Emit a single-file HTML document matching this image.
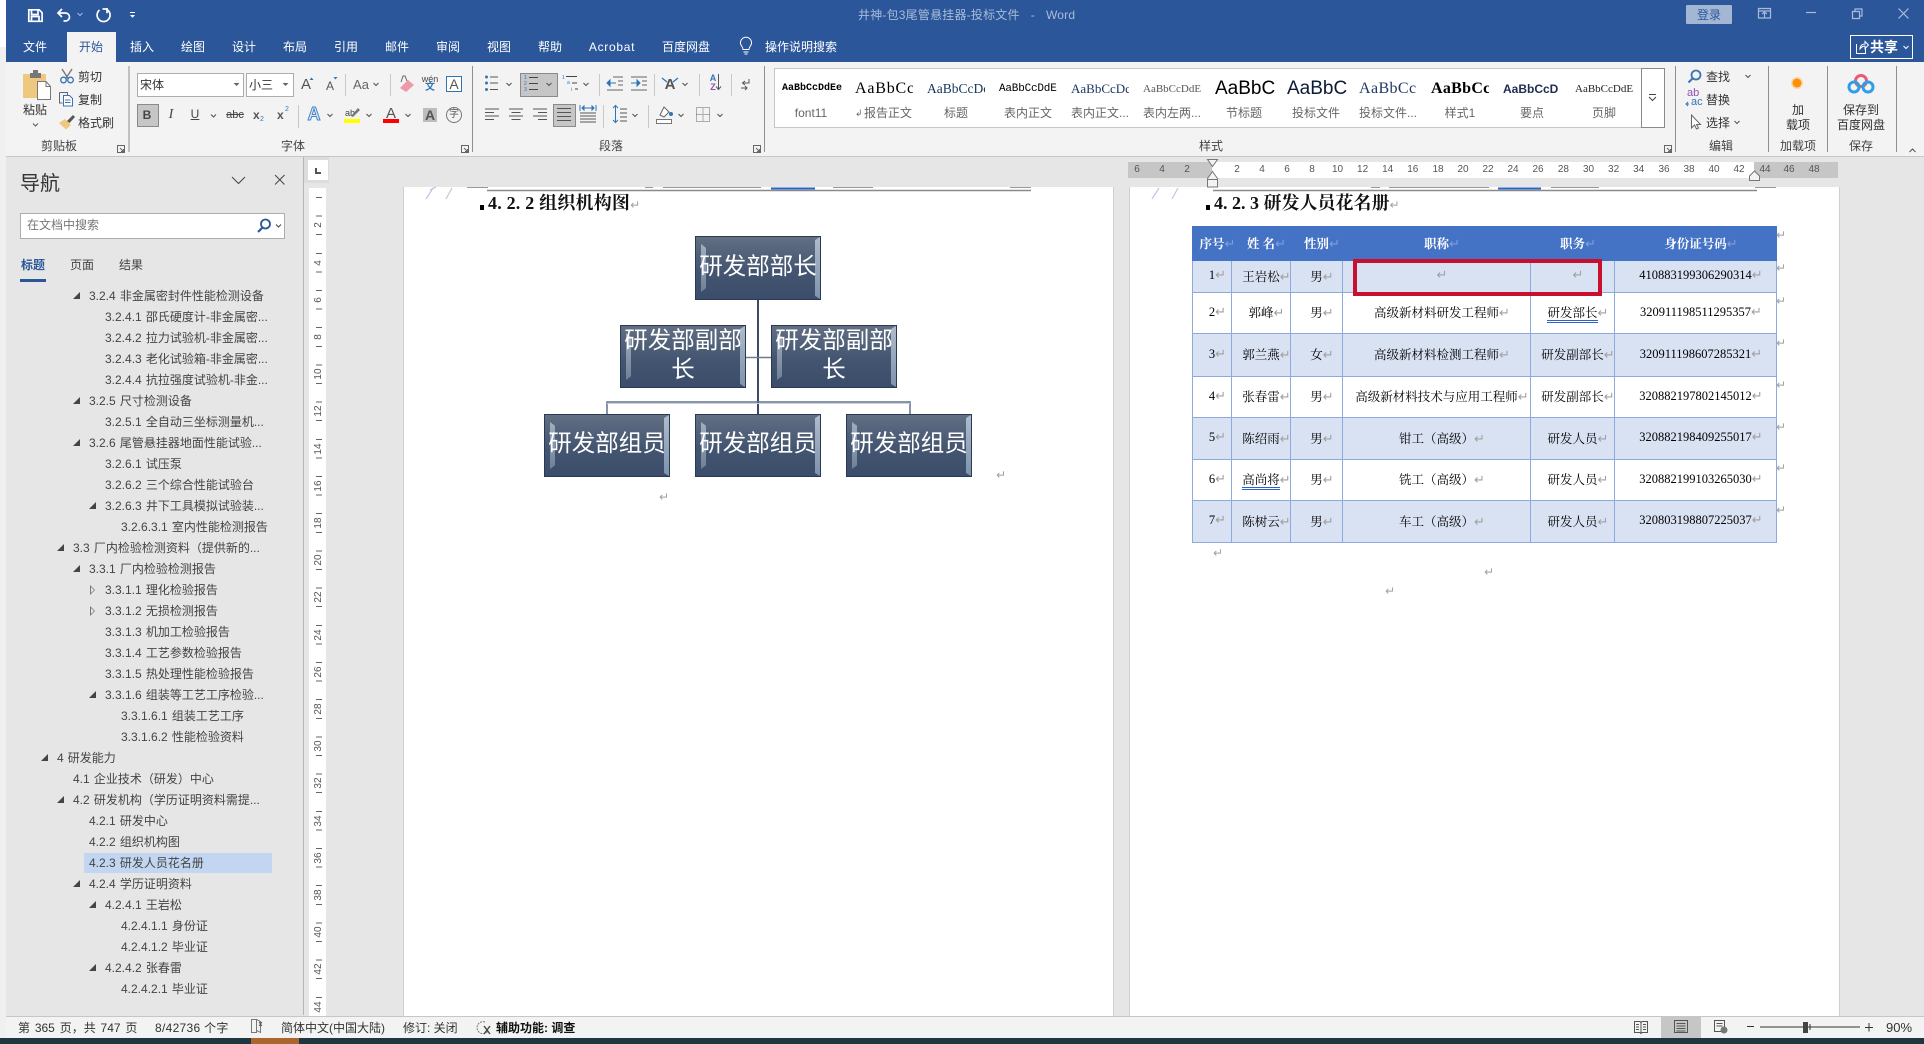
<!DOCTYPE html>
<html lang="zh">
<head>
<meta charset="utf-8">
<title>Word</title>
<style>
html,body{margin:0;padding:0}
body{width:1924px;height:1044px;position:relative;overflow:hidden;background:#e6e6e6;font-family:"Liberation Sans","Noto Sans CJK SC",sans-serif;font-size:12px;color:#444}
.a{position:absolute}
.t{position:absolute;white-space:nowrap;line-height:16px;height:16px}
.c{transform:translateX(-50%)}
.w{color:#fff}
.d{color:#333}
.g{color:#444}
.tree{position:absolute;left:0;top:1px;word-spacing:.8px}
.tr{position:absolute;width:0;height:0;border-left:7px solid transparent;border-bottom:7px solid #444}
.ho{position:absolute;width:0;height:0;border-left:5px solid #777;border-top:5px solid transparent;border-bottom:5px solid transparent}
.ho:after{content:"";position:absolute;left:-4px;top:-3px;width:0;height:0;border-left:3px solid #e6e6e6;border-top:3px solid transparent;border-bottom:3px solid transparent}
.hn{position:absolute;font-size:10px;line-height:12px;color:#555;top:164px;transform:translateX(-50%)}
.vn{position:absolute;font-size:10px;line-height:12px;color:#555;left:318px;width:0;height:0;white-space:nowrap}
.vn span{position:absolute;transform:translate(-50%,-50%) rotate(-90deg);left:1px;top:0}
.p{position:absolute;overflow:hidden;white-space:nowrap;width:58px;height:24px;line-height:24px;top:77px;color:#000}
.l{position:absolute;top:105px;line-height:16px;color:#666;white-space:nowrap;transform:translateX(-50%)}
.box{position:absolute;width:126px;border:1px solid #2a3a52;box-sizing:border-box;background:linear-gradient(#626f84,#435570 55%,#3c4d6b);color:#fff;font-family:"Noto Sans CJK SC",sans-serif;font-size:23.5px;line-height:29px;text-align:center}
.box:before{content:"";position:absolute;left:5px;top:7px;bottom:7px;width:5px;background:linear-gradient(#a3afbe,#6e8098);clip-path:polygon(0 0,100% 8%,100% 92%,0 100%)}
.box:after{content:"";position:absolute;right:0;top:0;bottom:0;width:5px;background:linear-gradient(#aebccc,#7e93ad);clip-path:polygon(100% 0,100% 100%,0 95%,0 5%)}
.box b{position:relative;z-index:1;font-weight:400;display:block;margin:0 -3px}
.ret{color:#a0a0a0;font-family:"DejaVu Sans",sans-serif;font-size:12px}
table{position:absolute;left:1192px;top:226px;width:584px;border-collapse:collapse;table-layout:fixed;font-family:"Liberation Serif","Noto Serif CJK SC",serif;font-size:12.5px;color:#000}
td{border:1px solid #8eaadb;padding:0 0 2px 0;text-align:center;white-space:nowrap;overflow:visible}
table .ret{display:inline-block;width:0;font-size:13px;line-height:1;text-align:left;font-weight:400}
tr.h td{background:#4472c4;color:#fff;font-weight:700;border-color:#4472c4}
tr.b td{background:#d9e2f3}
.u{border-bottom:3px double #2e62c8;padding-bottom:0}
</style>
</head>
<body>
<!-- base regions -->
<div class="a" style="left:0;top:0;width:6px;height:47px;background:#fff"></div>
<div class="a" style="left:0;top:47px;width:6px;height:991px;background:#f0f0f0"></div>
<div class="a" style="left:6px;top:0;width:1918px;height:62px;background:#2b579a"></div>
<div class="a" style="left:6px;top:62px;width:1918px;height:94px;background:#f3f3f3;border-bottom:1px solid #c6c6c6"></div>
<div class="a" style="left:67px;top:32px;width:49px;height:30px;background:#f3f3f3"></div>

<!-- title -->
<div class="t" style="left:858px;top:7px;color:#a8bbd8;letter-spacing:.2px;word-spacing:2px">井神-包3尾管悬挂器-投标文件 &nbsp;-&nbsp; Word</div>
<div class="a" style="left:1686px;top:5px;width:46px;height:19px;background:#a3b7d4;border-radius:1px"></div>
<div class="t c" style="left:1709px;top:7px;color:#2b579a">登录</div>

<!-- tabs -->
<div class="t c w" style="left:35px;top:39px">文件</div>
<div class="t c" style="left:91px;top:39px;color:#2b579a">开始</div>
<div class="t c w" style="left:142px;top:39px">插入</div>
<div class="t c w" style="left:193px;top:39px">绘图</div>
<div class="t c w" style="left:244px;top:39px">设计</div>
<div class="t c w" style="left:295px;top:39px">布局</div>
<div class="t c w" style="left:346px;top:39px">引用</div>
<div class="t c w" style="left:397px;top:39px">邮件</div>
<div class="t c w" style="left:448px;top:39px">审阅</div>
<div class="t c w" style="left:499px;top:39px">视图</div>
<div class="t c w" style="left:550px;top:39px">帮助</div>
<div class="t c w" style="left:612px;top:39px;letter-spacing:.7px">Acrobat</div>
<div class="t c w" style="left:686px;top:39px">百度网盘</div>
<div class="t w" style="left:765px;top:39px">操作说明搜索</div>
<div class="a" style="left:1850px;top:35px;width:61px;height:22px;border:1px solid #fff"></div>
<div class="t w" style="left:1870px;top:39px;font-size:14px;font-weight:700">共享</div>

<!-- clipboard labels -->
<div class="t c d" style="left:35px;top:102px">粘贴</div>
<div class="t d" style="left:78px;top:69px">剪切</div>
<div class="t d" style="left:78px;top:92px">复制</div>
<div class="t d" style="left:78px;top:115px">格式刷</div>
<div class="t c g" style="left:59px;top:138px">剪贴板</div>

<!-- font boxes -->
<div class="a" style="left:137px;top:73px;width:105px;height:22px;background:#fff;border:1px solid #adadad"></div>
<div class="t d" style="left:140px;top:77px">宋体</div>
<div class="a" style="left:246px;top:73px;width:46px;height:22px;background:#fff;border:1px solid #adadad"></div>
<div class="t d" style="left:249px;top:77px">小三</div>
<div class="a" style="left:137px;top:104px;width:20px;height:21px;background:#c6c6c6;border:1px solid #8a8a8a"></div>
<div class="t c" style="left:147px;top:107px;font-weight:700;color:#444">B</div>
<div class="t c" style="left:171px;top:107px;font-family:'Liberation Serif',serif;font-style:italic;font-size:14px;color:#444">I</div>
<div class="t c" style="left:195px;top:106px;text-decoration:underline;color:#444">U</div>
<div class="t c" style="left:235px;top:107px;text-decoration:line-through;color:#444;font-size:11px">abc</div>
<div class="t" style="left:253px;top:107px;font-weight:700;color:#555">x</div>
<div class="t" style="left:260px;top:112px;font-size:7px;color:#3a74b5">2</div>
<div class="t" style="left:277px;top:107px;font-weight:700;color:#555">x</div>
<div class="t" style="left:285px;top:102px;font-size:7px;color:#3a74b5">2</div>
<div class="t c" style="left:306px;top:77px;font-size:15px;color:#555">A</div>
<div class="t c" style="left:330px;top:78px;font-size:12px;color:#555">A</div>
<div class="t c" style="left:361px;top:77px;font-size:13px;color:#666">Aa</div>
<div class="t c" style="left:430px;top:71px;font-size:9px;color:#444">wén</div>
<div class="t c" style="left:430px;top:80px;font-size:10px;color:#2e75b6;font-weight:700">文</div>
<div class="a" style="left:446px;top:76px;width:14px;height:14px;border:1px solid #2e75b6;background:#fff"></div>
<div class="t c" style="left:454px;top:76px;font-size:14px;color:#555">A</div>
<div class="t c" style="left:314px;top:106px;font-size:18px;font-weight:700;color:#dce8f5;-webkit-text-stroke:1px #4a86c5">A</div>
<div class="t c" style="left:350px;top:105px;font-size:9px;color:#444">ab</div>
<div class="t c" style="left:391px;top:106px;font-size:15px;color:#555">A</div>
<div class="a" style="left:423px;top:108px;width:14px;height:14px;background:#bdbdbd"></div>
<div class="t c" style="left:430px;top:107px;font-size:14px;font-weight:700;color:#555">A</div>
<div class="t c" style="left:454px;top:107px;font-size:10px;color:#555">字</div>
<div class="t c g" style="left:293px;top:138px">字体</div>

<!-- paragraph -->
<div class="a" style="left:520px;top:73px;width:36px;height:22px;background:#c6c6c6;border:1px solid #8a8a8a"></div>
<div class="a" style="left:553px;top:104px;width:21px;height:21px;background:#c6c6c6;border:1px solid #8a8a8a"></div>
<div class="t c" style="left:670px;top:77px;font-size:15px;font-weight:700;color:#555">A</div>
<div class="t c" style="left:713px;top:70px;font-size:9px;font-weight:700;color:#2e75b6">A</div>
<div class="t c" style="left:713px;top:79px;font-size:9px;font-weight:700;color:#8a55a8">Z</div>
<div class="t c g" style="left:611px;top:138px">段落</div>

<!-- styles gallery -->
<div class="a" style="left:774px;top:68px;width:866px;height:58px;background:#fff;border:1px solid #c6c6c6"></div>
<div class="a" style="left:1641px;top:68px;width:22px;height:58px;background:#fff;border:1px solid #8a8a8a"></div>
<div class="p" style="left:782px;width:60px;font:700 10px/24px 'Liberation Mono',monospace">AaBbCcDdEe</div>
<div class="p" style="left:855px;font:16px/24px 'Liberation Serif',serif;letter-spacing:.8px">AaBbCcI</div>
<div class="p" style="left:927px;font:13.5px/24px 'Liberation Serif',serif;color:#17365d">AaBbCcDc</div>
<div class="p" style="left:999px;font:11px/24px 'Liberation Mono',monospace;letter-spacing:-.2px">AaBbCcDdE</div>
<div class="p" style="left:1071px;font:13px/24px 'Liberation Serif',serif;color:#17365d">AaBbCcDc</div>
<div class="p" style="left:1143px;font:11px/24px 'Liberation Serif',serif;color:#555">AaBbCcDdEe</div>
<div class="p" style="left:1215px;width:61px;font:19px/24px 'Liberation Sans',sans-serif">AaBbC</div>
<div class="p" style="left:1287px;width:61px;font:19px/24px 'Liberation Sans',sans-serif;color:#0b1a33">AaBbC</div>
<div class="p" style="left:1359px;font:16px/24px 'Liberation Serif',serif;letter-spacing:.4px;color:#1f3864">AaBbCc</div>
<div class="p" style="left:1431px;font:700 16px/24px 'Liberation Serif',serif;letter-spacing:.3px">AaBbCc</div>
<div class="p" style="left:1503px;font:700 12px/24px 'Liberation Sans',sans-serif;color:#1f2d50">AaBbCcD</div>
<div class="p" style="left:1575px;font:11px/24px 'Liberation Serif',serif;color:#222">AaBbCcDdE</div>
<div class="l" style="left:811px">font11</div>
<div class="l" style="left:888px">报告正文</div>
<div class="t" style="left:855px;top:105px;font-size:9px;color:#666">↲</div>
<div class="l" style="left:956px">标题</div>
<div class="l" style="left:1028px">表内正文</div>
<div class="l" style="left:1100px">表内正文...</div>
<div class="l" style="left:1172px">表内左两...</div>
<div class="l" style="left:1244px">节标题</div>
<div class="l" style="left:1316px">投标文件</div>
<div class="l" style="left:1388px">投标文件...</div>
<div class="l" style="left:1460px">样式1</div>
<div class="l" style="left:1532px">要点</div>
<div class="l" style="left:1604px">页脚</div>
<div class="t c g" style="left:1211px;top:138px">样式</div>

<!-- editing etc -->
<div class="t d" style="left:1706px;top:69px">查找</div>
<div class="t d" style="left:1706px;top:92px">替换</div>
<div class="t d" style="left:1706px;top:115px">选择</div>
<div class="t" style="left:1687px;top:88px;font-size:11px;line-height:10px;height:10px;color:#8a55a8">ab</div>
<div class="t" style="left:1691px;top:97px;font-size:11px;line-height:10px;height:10px;color:#2e75b6">ac</div>
<div class="t c g" style="left:1721px;top:138px">编辑</div>
<div class="t c d" style="left:1798px;top:102px">加</div>
<div class="t c d" style="left:1798px;top:117px">载项</div>
<div class="t c g" style="left:1798px;top:138px">加载项</div>
<div class="t c d" style="left:1861px;top:102px">保存到</div>
<div class="t c d" style="left:1861px;top:117px">百度网盘</div>
<div class="t c g" style="left:1861px;top:138px">保存</div>

<!-- nav pane -->
<div class="t" style="left:20px;top:171px;font-size:20px;line-height:26px;height:26px;color:#333">导航</div>
<div class="a" style="left:20px;top:213px;width:263px;height:24px;background:#fff;border:1px solid #adadad"></div>
<div class="t" style="left:27px;top:217px;color:#777">在文档中搜索</div>
<div class="t" style="left:21px;top:257px;color:#2b579a;font-weight:700">标题</div>
<div class="t" style="left:70px;top:257px">页面</div>
<div class="t" style="left:119px;top:257px">结果</div>
<div class="a" style="left:20px;top:279px;width:26px;height:3px;background:#2b579a"></div>
<div class="a" style="left:84px;top:853px;width:188px;height:20px;background:#c3d6f1"></div>

<div class="tree">
<div class="tr" style="left:73px;top:291px"></div><div class="t" style="left:89px;top:287px">3.2.4 非金属密封件性能检测设备</div>
<div class="t" style="left:105px;top:308px">3.2.4.1 邵氏硬度计-非金属密...</div>
<div class="t" style="left:105px;top:329px">3.2.4.2 拉力试验机-非金属密...</div>
<div class="t" style="left:105px;top:350px">3.2.4.3 老化试验箱-非金属密...</div>
<div class="t" style="left:105px;top:371px">3.2.4.4 抗拉强度试验机-非金...</div>
<div class="tr" style="left:73px;top:396px"></div><div class="t" style="left:89px;top:392px">3.2.5 尺寸检测设备</div>
<div class="t" style="left:105px;top:413px">3.2.5.1 全自动三坐标测量机...</div>
<div class="tr" style="left:73px;top:438px"></div><div class="t" style="left:89px;top:434px">3.2.6 尾管悬挂器地面性能试验...</div>
<div class="t" style="left:105px;top:455px">3.2.6.1 试压泵</div>
<div class="t" style="left:105px;top:476px">3.2.6.2 三个综合性能试验台</div>
<div class="tr" style="left:89px;top:501px"></div><div class="t" style="left:105px;top:497px">3.2.6.3 井下工具模拟试验装...</div>
<div class="t" style="left:121px;top:518px">3.2.6.3.1 室内性能检测报告</div>
<div class="tr" style="left:57px;top:543px"></div><div class="t" style="left:73px;top:539px">3.3 厂内检验检测资料（提供新的...</div>
<div class="tr" style="left:73px;top:564px"></div><div class="t" style="left:89px;top:560px">3.3.1 厂内检验检测报告</div>
<div class="ho" style="left:90px;top:584px"></div><div class="t" style="left:105px;top:581px">3.3.1.1 理化检验报告</div>
<div class="ho" style="left:90px;top:605px"></div><div class="t" style="left:105px;top:602px">3.3.1.2 无损检测报告</div>
<div class="t" style="left:105px;top:623px">3.3.1.3 机加工检验报告</div>
<div class="t" style="left:105px;top:644px">3.3.1.4 工艺参数检验报告</div>
<div class="t" style="left:105px;top:665px">3.3.1.5 热处理性能检验报告</div>
<div class="tr" style="left:89px;top:690px"></div><div class="t" style="left:105px;top:686px">3.3.1.6 组装等工艺工序检验...</div>
<div class="t" style="left:121px;top:707px">3.3.1.6.1 组装工艺工序</div>
<div class="t" style="left:121px;top:728px">3.3.1.6.2 性能检验资料</div>
<div class="tr" style="left:41px;top:753px"></div><div class="t" style="left:57px;top:749px">4 研发能力</div>
<div class="t" style="left:73px;top:770px">4.1 企业技术（研发）中心</div>
<div class="tr" style="left:57px;top:795px"></div><div class="t" style="left:73px;top:791px">4.2 研发机构（学历证明资料需提...</div>
<div class="t" style="left:89px;top:812px">4.2.1 研发中心</div>
<div class="t" style="left:89px;top:833px">4.2.2 组织机构图</div>
<div class="t" style="left:89px;top:854px">4.2.3 研发人员花名册</div>
<div class="tr" style="left:73px;top:879px"></div><div class="t" style="left:89px;top:875px">4.2.4 学历证明资料</div>
<div class="tr" style="left:89px;top:900px"></div><div class="t" style="left:105px;top:896px">4.2.4.1 王岩松</div>
<div class="t" style="left:121px;top:917px">4.2.4.1.1 身份证</div>
<div class="t" style="left:121px;top:938px">4.2.4.1.2 毕业证</div>
<div class="tr" style="left:89px;top:963px"></div><div class="t" style="left:105px;top:959px">4.2.4.2 张春雷</div>
<div class="t" style="left:121px;top:980px">4.2.4.2.1 毕业证</div>
</div>

<div class="a" style="left:303px;top:157px;width:1px;height:858px;background:#b5b5b5"></div>

<!-- vertical ruler -->
<div class="a" style="left:304px;top:157px;width:25px;height:26px;background:#dcdcdc"></div>
<div class="a" style="left:308px;top:160px;width:20px;height:20px;background:#fff"></div>
<div class="a" style="left:315px;top:168px;width:2px;height:6px;background:#555"></div>
<div class="a" style="left:315px;top:172px;width:6px;height:2px;background:#555"></div>
<div class="a" style="left:309px;top:188px;width:17px;height:828px;background:#fff"></div>
<div class="a" style="left:316px;top:197px;width:6px;height:810px;background:repeating-linear-gradient(to bottom,#666 0,#666 1px,transparent 1px,transparent 18.6px)"></div>
<div class="vn" style="top:225px"><span style="background:#fff">2</span></div>
<div class="vn" style="top:263px"><span style="background:#fff">4</span></div>
<div class="vn" style="top:300px"><span style="background:#fff">6</span></div>
<div class="vn" style="top:337px"><span style="background:#fff">8</span></div>
<div class="vn" style="top:374px"><span style="background:#fff">10</span></div>
<div class="vn" style="top:411px"><span style="background:#fff">12</span></div>
<div class="vn" style="top:449px"><span style="background:#fff">14</span></div>
<div class="vn" style="top:486px"><span style="background:#fff">16</span></div>
<div class="vn" style="top:523px"><span style="background:#fff">18</span></div>
<div class="vn" style="top:560px"><span style="background:#fff">20</span></div>
<div class="vn" style="top:597px"><span style="background:#fff">22</span></div>
<div class="vn" style="top:635px"><span style="background:#fff">24</span></div>
<div class="vn" style="top:672px"><span style="background:#fff">26</span></div>
<div class="vn" style="top:709px"><span style="background:#fff">28</span></div>
<div class="vn" style="top:746px"><span style="background:#fff">30</span></div>
<div class="vn" style="top:783px"><span style="background:#fff">32</span></div>
<div class="vn" style="top:821px"><span style="background:#fff">34</span></div>
<div class="vn" style="top:858px"><span style="background:#fff">36</span></div>
<div class="vn" style="top:895px"><span style="background:#fff">38</span></div>
<div class="vn" style="top:932px"><span style="background:#fff">40</span></div>
<div class="vn" style="top:969px"><span style="background:#fff">42</span></div>
<div class="vn" style="top:1007px"><span style="background:#fff">44</span></div>

<!-- horizontal ruler -->
<div class="a" style="left:1128px;top:162px;width:710px;height:16px;background:#c6c6c6"></div>
<div class="a" style="left:1212px;top:162px;width:542px;height:16px;background:#fff"></div>
<div class="hn" style="left:1137px">6</div><div class="hn" style="left:1162px">4</div><div class="hn" style="left:1187px">2</div>
<div class="hn" style="left:1237px">2</div><div class="hn" style="left:1262px">4</div><div class="hn" style="left:1287px">6</div><div class="hn" style="left:1312px">8</div><div class="hn" style="left:1337.5px">10</div><div class="hn" style="left:1362.6px">12</div><div class="hn" style="left:1387.7px">14</div><div class="hn" style="left:1412.8px">16</div><div class="hn" style="left:1438px">18</div><div class="hn" style="left:1463px">20</div><div class="hn" style="left:1488px">22</div><div class="hn" style="left:1513px">24</div><div class="hn" style="left:1538px">26</div><div class="hn" style="left:1563.4px">28</div><div class="hn" style="left:1588.5px">30</div><div class="hn" style="left:1613.6px">32</div><div class="hn" style="left:1638.7px">34</div><div class="hn" style="left:1664px">36</div><div class="hn" style="left:1689px">38</div><div class="hn" style="left:1714px">40</div><div class="hn" style="left:1739px">42</div><div class="hn" style="left:1765px">44</div><div class="hn" style="left:1789px">46</div><div class="hn" style="left:1814px">48</div>

<!-- pages -->
<div class="a" style="left:404px;top:187px;width:709px;height:829px;background:#fff;box-shadow:-1px 0 0 #cfcfcf,1px 0 0 #cfcfcf"></div>
<div class="a" style="left:1130px;top:187px;width:709px;height:829px;background:#fff;box-shadow:-1px 0 0 #cfcfcf,1px 0 0 #cfcfcf"></div>

<!-- page 1 -->
<div class="a" style="left:480px;top:205px;width:4px;height:5px;background:#000"></div>
<div class="t" style="left:488px;top:191px;height:24px;line-height:24px;font-family:'Liberation Serif','Noto Serif CJK SC',serif;font-size:18px;font-weight:700;color:#111;letter-spacing:.2px">4. 2. 2 组织机构图<span class="ret" style="font-weight:400;font-size:12px">↵</span></div>
<div class="box" style="left:695px;top:236px;height:64px;padding-top:13px"><b>研发部部长</b></div>
<div class="box" style="left:620px;top:325px;height:63px;padding-top:0"><b style="margin-top:-2px">研发部副部<br>长</b></div>
<div class="box" style="left:771px;top:325px;height:63px;padding-top:0"><b style="margin-top:-2px">研发部副部<br>长</b></div>
<div class="box" style="left:544px;top:414px;height:63px;padding-top:12px"><b>研发部组员</b></div>
<div class="box" style="left:695px;top:414px;height:63px;padding-top:12px"><b>研发部组员</b></div>
<div class="box" style="left:846px;top:414px;height:63px;padding-top:12px"><b>研发部组员</b></div>
<div class="t c ret" style="left:1001px;top:467px">↵</div>
<div class="t c ret" style="left:664px;top:489px">↵</div>

<!-- page 2 -->
<div class="a" style="left:1206px;top:205px;width:4px;height:5px;background:#000"></div>
<div class="t" style="left:1214px;top:191px;height:24px;line-height:24px;font-family:'Liberation Serif','Noto Serif CJK SC',serif;font-size:18px;font-weight:700;color:#111;letter-spacing:0">4. 2. 3 研发人员花名册<span class="ret" style="font-weight:400;font-size:12px">↵</span></div>

<table>
<colgroup><col style="width:39px"><col style="width:59px"><col style="width:52px"><col style="width:188px"><col style="width:84px"><col style="width:162px"></colgroup>
<tr class="h" style="height:34px"><td>序号<span class="ret" style="color:#7f9fdc">↵</span></td><td>姓 名<span class="ret" style="color:#7f9fdc">↵</span></td><td>性别<span class="ret" style="color:#7f9fdc">↵</span></td><td>职称<span class="ret" style="color:#7f9fdc">↵</span></td><td>职务<span class="ret" style="color:#7f9fdc">↵</span></td><td>身份证号码<span class="ret" style="color:#7f9fdc">↵</span></td></tr>
<tr class="b" style="height:32px"><td>1<span class="ret">↵</span></td><td>王岩松<span class="ret">↵</span></td><td>男<span class="ret">↵</span></td><td><span class="ret">↵</span></td><td><span class="ret">↵</span></td><td>410883199306290314<span class="ret">↵</span></td></tr>
<tr style="height:41px"><td>2<span class="ret">↵</span></td><td>郭峰<span class="ret">↵</span></td><td>男<span class="ret">↵</span></td><td>高级新材料研发工程师<span class="ret">↵</span></td><td><span class="u">研发部长</span><span class="ret">↵</span></td><td>320911198511295357<span class="ret">↵</span></td></tr>
<tr class="b" style="height:43px"><td>3<span class="ret">↵</span></td><td>郭兰燕<span class="ret">↵</span></td><td>女<span class="ret">↵</span></td><td>高级新材料检测工程师<span class="ret">↵</span></td><td>研发副部长<span class="ret">↵</span></td><td>320911198607285321<span class="ret">↵</span></td></tr>
<tr style="height:41px"><td>4<span class="ret">↵</span></td><td>张春雷<span class="ret">↵</span></td><td>男<span class="ret">↵</span></td><td>高级新材料技术与应用工程师<span class="ret">↵</span></td><td>研发副部长<span class="ret">↵</span></td><td>320882197802145012<span class="ret">↵</span></td></tr>
<tr class="b" style="height:42px"><td>5<span class="ret">↵</span></td><td>陈绍雨<span class="ret">↵</span></td><td>男<span class="ret">↵</span></td><td>钳工（高级）<span class="ret">↵</span></td><td>研发人员<span class="ret">↵</span></td><td>320882198409255017<span class="ret">↵</span></td></tr>
<tr style="height:41px"><td>6<span class="ret">↵</span></td><td><span class="u">高尚将</span><span class="ret">↵</span></td><td>男<span class="ret">↵</span></td><td>铣工（高级）<span class="ret">↵</span></td><td>研发人员<span class="ret">↵</span></td><td>320882199103265030<span class="ret">↵</span></td></tr>
<tr class="b" style="height:42px"><td>7<span class="ret">↵</span></td><td>陈树云<span class="ret">↵</span></td><td>男<span class="ret">↵</span></td><td>车工（高级）<span class="ret">↵</span></td><td>研发人员<span class="ret">↵</span></td><td>320803198807225037<span class="ret">↵</span></td></tr>
</table>
<div class="a" style="left:1353px;top:259px;width:241px;height:29px;border:4px solid #c8102e"></div>
<div class="t c ret" style="left:1781px;top:227px">↵</div>
<div class="t c ret" style="left:1781px;top:260px">↵</div>
<div class="t c ret" style="left:1781px;top:293px">↵</div>
<div class="t c ret" style="left:1781px;top:335px">↵</div>
<div class="t c ret" style="left:1781px;top:377px">↵</div>
<div class="t c ret" style="left:1781px;top:419px">↵</div>
<div class="t c ret" style="left:1781px;top:460px">↵</div>
<div class="t c ret" style="left:1781px;top:502px">↵</div>
<div class="t c ret" style="left:1218px;top:545px">↵</div>
<div class="t c ret" style="left:1489px;top:564px">↵</div>
<div class="t c ret" style="left:1390px;top:583px">↵</div>

<!-- status bar -->
<div class="a" style="left:6px;top:1016px;width:1918px;height:22px;background:#f3f3f3;border-top:1px solid #c6c6c6;box-sizing:border-box"></div>
<div class="a" style="left:1661px;top:1017px;width:40px;height:21px;background:#c6c6c6"></div>
<div class="a" style="left:0;top:1038px;width:1924px;height:6px;background:#1f3540"></div>
<div class="a" style="left:251px;top:1038px;width:48px;height:6px;background:#a9662e"></div>
<div class="t d" style="left:18px;top:1020px;word-spacing:1.5px">第 365 页，共 747 页</div>
<div class="t d" style="left:155px;top:1020px;letter-spacing:.3px">8/42736 个字</div>
<div class="t d" style="left:281px;top:1020px">简体中文(中国大陆)</div>
<div class="t d" style="left:403px;top:1020px">修订: 关闭</div>
<div class="t" style="left:496px;top:1020px;color:#111;font-weight:700">辅助功能: 调查</div>
<div class="t d" style="left:1886px;top:1020px;font-size:13px">90%</div>

<!-- icons overlay -->
<svg class="a" style="left:0;top:0" width="1924" height="1044" viewBox="0 0 1924 1044" fill="none">
 <!-- QAT -->
 <g stroke="#fff" stroke-width="1.7">
  <path d="M28.8 9.8h10.4l2.9 2.9v8.6H28.8z"/><path d="M31.5 10v4.5h6.5V10"/><path d="M31.5 21v-4.5h7.5V21"/>
  <path d="M58.5 13h7a4 4 0 0 1 0 8h-2"/><path d="M62 9l-4 4l4 4"/>
  <path d="M99.5 10a6.5 6.5 0 1 0 7.6-.4"/><path d="M107 8v5.2"/><path d="M102.5 9h4.6"/>
 </g>
 <path d="M77.5 13l2.5 2.5l2.5-2.5" stroke="#a8bbd8" stroke-width="1"/>
 <path d="M130 12.5h5" stroke="#fff"/><path d="M130 15h5l-2.5 2.8z" fill="#fff"/>
 <!-- window -->
 <g stroke="#a8bbd8" stroke-width="1.2">
  <path d="M1758.5 8.5h12v9.5h-12zM1758.5 11h12"/><path d="M1764.5 17.5v-5M1762 14l2.5-2l2.5 2"/>
  <path d="M1806 12.5h10"/>
  <path d="M1852.5 11.5h7v7h-7zM1855 11.5v-2.5h7v7h-2.500"/>
  <path d="M1898.500 8.500l10 10M1908.500 8.500l-10 10"/>
 </g>
 <!-- share icon & lightbulb -->
 <g stroke="#fff" stroke-width="1">
  <path d="M1856.500 44v9.500h9V48"/><path d="M1860 49c0-3 2-5 5-5v-2.500l3.500 3.500l-3.500 3.500V46c-2 0-3.500 1-5 3z"/>
  <g transform="translate(0,-6)"><path d="M741 51a5.500 5.500 0 1 1 10 0c-1 1.500-2 2.500-2 4.500h-6c0-2-1-3-2-4.500z"/><path d="M743.500 58h5M744.500 60h3"/></g>
 </g>
 <path d="M1903.500 46l2.500 2.500l2.500-2.500" stroke="#fff"/>

 <!-- group separators -->
 <g stroke="#8f8f8f"><path d="M129 66v86M472.500 66v86M764.500 66v86M1675.500 66v86M1768.500 66v86M1827.500 66v86M1896.500 66v86"/></g>
 <g stroke="#c8c8c8"><path d="M345.500 74v22M390.500 74v22M298.500 105v23M599.500 74v22M654.500 74v22M699.500 74v22M731.500 74v22M603.500 105v23M648.500 105v23"/></g>

 <!-- paste -->
 <rect x="23" y="74" width="23" height="24" rx="1" fill="#edc87e"/>
 <rect x="30" y="73" width="11" height="5" fill="#777"/><rect x="33" y="70" width="5" height="4" fill="#777"/>
 <path d="M37.500 81.500h8.500l4.500 5v13h-13z" fill="#fff" stroke="#777"/><path d="M46 81.500v5h4.500" stroke="#777"/>
 <path d="M33 123.500l2.500 2.500l2.500-2.500" stroke="#555"/>
 <!-- scissors -->
 <path d="M62 69l6.500 10M72 69l-6.500 10" stroke="#777" stroke-width="1.400"/>
 <circle cx="63.500" cy="80" r="2.800" stroke="#3a74b5" stroke-width="1.300"/><circle cx="70.500" cy="80" r="2.800" stroke="#3a74b5" stroke-width="1.300"/>
 <!-- copy -->
 <path d="M59.500 92.500h8v3M59.500 92.500v10.500h3" stroke="#666"/>
 <path d="M63.500 95.500h6l3 3v7.500h-9z" stroke="#3a74b5" fill="#fff"/><path d="M65 100h5.500M65 102.500h5.500" stroke="#3a74b5"/>
 <!-- brush -->
 <path d="M59 123l6-4l6 6l-5 4.500z" fill="#edc87e"/><path d="M67 121l6-6l2 2l-5.500 6z" fill="#555"/>
 <!-- launchers -->
 <g stroke="#666"><path d="M117.500 145.500h7v7h-7zM120 148l3.500 3.500M123.500 149v2.500H121"/><path d="M461.500 145.500h7v7h-7zM464 148l3.500 3.500M467.500 149v2.500H465"/><path d="M753.500 145.500h7v7h-7zM756 148l3.500 3.500M759.500 149v2.500H757"/><path d="M1664.500 145.500h7v7h-7zM1667 148l3.500 3.500M1670.500 149v2.500H1668"/></g>

 <!-- font arrows -->
 <path d="M233.500 83h6l-3 3zM282.500 83h6l-3 3z" fill="#666"/>
 <path d="M309.500 80l2-2.500l2 2.500z" fill="#2e75b6"/><path d="M333.500 77l2 2.500l2-2.500z" fill="#2e75b6"/>
 <!-- chevrons -->
 <path d="M211 114.500l2.500 2.500l2.500-2.500M373.500 83l2.500 2.500l2.500-2.500M327.500 114l2.500 2.500l2.500-2.500M366.500 114l2.500 2.500l2.500-2.500M405.500 114l2.500 2.500l2.500-2.500M506.500 83l2.500 2.500l2.500-2.500M546.500 83l2.500 2.500l2.500-2.500M583.500 83l2.500 2.500l2.500-2.500M682.500 83l2.500 2.500l2.500-2.500M632.500 114l2.500 2.500l2.500-2.500M678.500 114l2.500 2.500l2.500-2.500M717.500 114l2.500 2.500l2.500-2.500M1745.500 75l2.500 2.500l2.500-2.500M1734.500 121l2.500 2.500l2.500-2.500M1909.500 152l3-3l3 3" stroke="#555" stroke-width="1.100"/>
 <!-- eraser -->
 <path d="M400 88l8-8l6 5l-8 7z" fill="#ec9aa8"/><path d="M401 82l2-6h2l2 5" stroke="#666"/>
 <!-- highlight, colour bars -->
 <path d="M351 116l7-8l2 2l-7 7z" fill="#777"/>
 <rect x="344" y="119" width="16" height="4" fill="#ff0"/><rect x="383" y="119" width="16" height="4" fill="#f00"/>
 <circle cx="454" cy="115" r="7.500" stroke="#777"/>
 <!-- bullets -->
 <g fill="#3a74b5"><circle cx="486.500" cy="77" r="1.500"/><circle cx="486.500" cy="83" r="1.500"/><circle cx="486.500" cy="89.500" r="1.500"/></g>
 <path d="M490 77h8M490 83h8M490 89.500h8" stroke="#555"/>
 <g fill="#2e75b6" font-size="5" font-family="Liberation Sans"><text x="524" y="79">1</text><text x="524" y="85">2</text><text x="524" y="91">3</text><text x="562" y="79">1</text><text x="567" y="84">a</text><text x="571" y="91">i</text></g>
 <path d="M529 77.500h9M529 83.500h9M529 89.500h9M566 76.500h11M572 83h5M575 89h3" stroke="#444"/>
 <!-- indents -->
 <path d="M613 77h10M618 81h5M618 85h5M607 90h16M631 77h16M642 81h5M642 85h5M631 90h16" stroke="#666"/>
 <path d="M607 83h9M607 83l3-3v6zM631 83h9M640 83l-3-3v6z" stroke="#2e75b6" fill="#2e75b6"/>
 <path d="M662 78l5 4M678 78l-5 4" stroke="#2e75b6" stroke-width="1.300"/>
 <path d="M718.500 74v15M716 86.500l2.500 3l2.500-3" stroke="#555"/>
 <path d="M749 79v4h-6M745 81l-2.500 2l2.500 2" stroke="#555"/><path d="M741 88h6M745 86l2 2l-2 2" stroke="#555"/>
 <!-- aligns -->
 <path d="M485 109h14M485 112.500h9M485 116h14M485 119.500h9M509 109h14M511.500 112.500h9M509 116h14M511.500 119.500h9M533 109h14M538 112.500h9M533 116h14M538 119.500h9M557 108.500h14M557 112.500h14M557 116.500h14M557 120.500h14M580 113h16M580 116h16M580 119h16M580 122h16" stroke="#555"/>
 <path d="M580 105v6M596 105v6" stroke="#2e75b6"/><path d="M582 108h12M582 108l2-2v4zM594 108l-2-2v4z" stroke="#2e75b6"/>
 <path d="M615.500 106v16M613 108l2.500-2.500l2.500 2.500M613 120l2.500 2.500l2.500-2.500" stroke="#2e75b6"/>
 <path d="M620 109h7M620 113h7M620 117h7M620 121h7" stroke="#555"/>
 <!-- shading, borders -->
 <path d="M656.500 119.500h15v4h-15z" stroke="#777" fill="#fff"/><path d="M660 115l4-8l5 5l-5 5z" stroke="#666" fill="#fff"/><circle cx="671" cy="114" r="2" fill="#2e75b6"/>
 <path d="M696.500 107.500h13v14h-13zM696.500 114.500h13M703 107.500v14" stroke="#666" stroke-dasharray="1 1"/>

 <!-- gallery scroll -->
 <path d="M1649 94.500h7M1649 97l3.500 3.500l3.500-3.500" stroke="#444"/>
 <!-- find -->
 <circle cx="1696" cy="75" r="4.500" stroke="#3a74b5" stroke-width="1.800"/><path d="M1692.500 78.500l-4 4" stroke="#3a74b5" stroke-width="2"/>
 <path d="M1691.500 115v13l3-3l2 4l2-1l-2-3.500h4z" stroke="#666" fill="#fff"/>
 <path d="M1688 101l-2 2l2 2M1686 103h3" stroke="#2e75b6" transform="translate(0,1)"/>
 <!-- addin dot -->
 <circle cx="1797" cy="83" r="4.500" fill="#ff9000"/><circle cx="1797" cy="83" r="6" fill="#ff9000" opacity=".25"/>
 <!-- baidu -->
 <circle cx="1861" cy="81" r="5.500" stroke="#ec5a72" stroke-width="3"/>
 <circle cx="1854" cy="87" r="5" stroke="#2e9fe6" stroke-width="3"/><circle cx="1868" cy="87" r="5" stroke="#2e9fe6" stroke-width="3"/>

 <!-- nav icons -->
 <path d="M232 177l6.500 6.500l6.500-6.500M275 175l9.500 9.500M284.500 175l-9.500 9.500" stroke="#444"/>
 <circle cx="265.500" cy="224" r="4.500" stroke="#2b579a" stroke-width="1.800"/><path d="M262 228l-4 4" stroke="#2b579a" stroke-width="2.200"/>
 <path d="M276 224.500l2.500 2.500l2.500-2.500" stroke="#444"/>

 <!-- h ruler markers -->
 <path d="M1207.500 159.500h10l-5 7zM1207.500 178.500l5-7l5 7v8.500h-10z" fill="#f3f3f3" stroke="#777"/>
 <path d="M1207.500 179.500h10" stroke="#777"/>
 <path d="M1749.500 180.500v-4.500l5-5l5 5v4.500z" fill="#f3f3f3" stroke="#777"/>

 <!-- page heads -->
 <g stroke="#8a8a8a" stroke-width="1.500"><path d="M487 190.500h544M1213 190.500h544"/></g>
 <path d="M467 187.500h21M1010 187.500h21M1755 187.500h21M645 187.500h8M663 187.500h98M833 187.500h40M1371 187.500h9M1389 187.500h100M1551 187.500h48" stroke="#999"/>
 <path d="M771 188.500h44M1498 188.500h43" stroke="#2b62c8" stroke-width="2"/>
 <path d="M426 199l7-11M446 199l6-11M430 190l6-3M1152 199l7-11M1172 199l6-11" stroke="#c9c4e6" stroke-width="1.300"/>

 <!-- org connectors -->
 <path d="M758 300v114" stroke="#3a4a63" stroke-width="2"/>
 <path d="M746 357.500h25" stroke="#6f7d8f" stroke-width="1.500"/>
 <path d="M607 414v-12h303v12" stroke="#60708a" stroke-width="1.500"/>
 <path d="M607 403.500h303" stroke="#c9d2dc"/>

 <!-- status icons -->
 <path d="M251.500 1019.500h5v13h-5zM256.500 1019.500l4 2v11l-4-2z" stroke="#777"/><path d="M259 1022l3 4M262 1022l-3 4" stroke="#555"/>
 <path d="M485 1022a6 6 0 1 0 3 9" stroke="#777" stroke-dasharray="2 1"/><path d="M484 1026l6 8M490 1026l-6 8" stroke="#444" stroke-width="1.400"/>
 <path d="M1634.500 1021.500h5.500l1 1l1-1h5.500v11h-5.500l-1 1l-1-1h-5.500zM1641 1022.500v10M1636 1024.500h3M1636 1027h3M1636 1029.500h3M1643 1024.500h3M1643 1027h3M1643 1029.500h3" stroke="#555"/>
 <path d="M1674.500 1020.500h13v12h-13zM1676.500 1023.500h9M1676.500 1026h9M1676.500 1028.500h9M1676.500 1031h9" stroke="#555"/>
 <path d="M1714.500 1020.500h10v11h-10zM1716.500 1023.500h6M1716.500 1026h6" stroke="#555"/><circle cx="1724" cy="1030" r="3.500" fill="#777"/>
 <path d="M1747 1026.500h7M1760 1027h100M1865 1027.500h8M1869 1023v8.500M1810 1024v6" stroke="#333"/>
 <rect x="1803" y="1022" width="5" height="11" fill="#444"/>
</svg>
</body>
</html>
